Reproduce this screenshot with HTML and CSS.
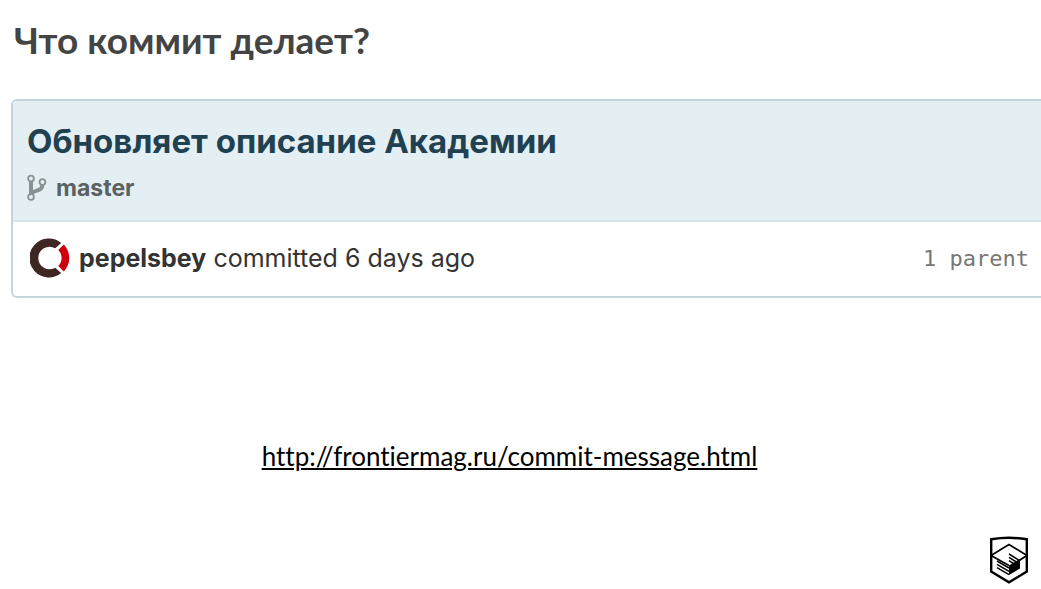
FILE: index.html
```html
<!DOCTYPE html>
<html lang="ru">
<head>
<meta charset="utf-8">
<meta name="viewport" content="width=device-width, initial-scale=1">
<title>Что коммит делает?</title>
<link rel="stylesheet" href="styles.css">
</head>
<body class="slide">
<h1 class="slide-title">Что коммит делает?</h1>
<main class="content">
<article class="commit">
<header class="commit-head">
<h2 class="commit-title">Обновляет описание Академии</h2>
<div class="branch">
<svg class="branch-icon" viewBox="0 0 20 28" aria-hidden="true">
<path d="M4 6V22" fill="none" stroke="#879192" stroke-width="4"/>
<path d="M15.500 10C15.500 17.500 9 15.500 5 19" fill="none" stroke="#879192" stroke-width="4"/>
<g fill="#e4eff4" stroke="#879192" stroke-width="1.800"><circle cx="4" cy="4.500" r="2.900"/><circle cx="15.500" cy="8" r="2.900"/><circle cx="4" cy="23" r="2.900"/></g>
</svg>
<span>master</span>
</div>
</header>
<footer class="commit-meta">
<svg class="avatar" viewBox="0 0 40 40" aria-hidden="true">
<path d="M31.200 4.900A19.500 19.500 0 1 0 31.200 35.100L25.200 29.800A11.300 11.300 0 1 1 25.200 10.200Z" fill="#3e2723"/>
<path d="M33.800 6.500A19.500 19.500 0 0 1 33.800 33.500L28.300 28A11.300 11.300 0 0 0 28.300 12Z" fill="#ce000c"/>
</svg>
<p class="author"><strong>pepelsbey</strong> committed 6 days ago</p>
<span class="parent">1 parent</span>
</footer>
</article>
<a class="source" href="http://frontiermag.ru/commit-message.html">http://frontiermag.ru/commit-message.html</a>
</main>
<footer class="slide-foot">
<svg class="logo" viewBox="0 0 40 48" role="img" aria-label="HTML Academy">
<path d="M2.200 3.300Q20 .3 37.800 3.300V35.500L20 46.300L2.200 35.500Z" fill="none" stroke="#000" stroke-width="2.400"/>
<path d="M2 19.500L20 8.500L38 19.500M2 19.500L20 29.500" fill="none" stroke="#000" stroke-width="1.600"/>
<path d="M20 29.500L38 18.500V20.500L31 25V32.500L20 39Z"/>
<path d="M8 25L20 32M8 28.300L20 35.300M8 31.600L20 38.600M20 18L31 25M20 21.300L29 27M20 24.600L26 28.500" fill="none" stroke="#000" stroke-width="1.500"/>
</svg>
</footer>
</body>
</html>
```
FILE: styles.css
```css
* {
  box-sizing: border-box;
}

.slide {
  display: flex;
  flex-direction: column;
  min-height: 100vh;
  margin: 0;
  overflow-x: hidden;
  background: #fff;
  color: #333;
  font-family: Inter, "Liberation Sans", sans-serif;
}

.slide-title {
  margin: 0;
  padding: 16px 14px 0;
  color: #444;
  font-family: Lato, sans-serif;
  font-size: 37px;
  font-weight: 700;
  line-height: 48px;
}

.content {
  display: flex;
  flex-direction: column;
  margin-top: 35px;
}

.commit {
  margin-left: 11px;
  border: 2px solid #c5d5dd;
  border-right: 0;
  border-radius: 6px 0 0 6px;
  overflow: hidden;
}

.commit-head {
  padding: 20px 14px 18px;
  border-bottom: 2px solid #d8e6ec;
  background: #e4eff4;
}

.commit-title {
  margin: 0;
  color: #224150;
  font-size: 33px;
  font-weight: 700;
  line-height: 40px;
}

.branch {
  display: flex;
  align-items: center;
  gap: 9px;
  margin-top: 13px;
  color: #5c6163;
  font-size: 23px;
  font-weight: 700;
  line-height: 28px;
}

.branch-icon {
  width: 20px;
  height: 28px;
}

.commit-meta {
  display: flex;
  align-items: center;
  padding: 16px 12px 18px 17px;
}

.avatar {
  width: 40px;
  height: 40px;
}

.author {
  flex: 1;
  margin: 0 0 0 9px;
  font-size: 25px;
  line-height: 40px;
}

.parent {
  color: #777;
  font-family: "DejaVu Sans Mono", monospace;
  font-size: 22px;
}

.source {
  align-self: center;
  margin: 140px 22px 0 0;
  color: #000;
  font-family: Lato, sans-serif;
  font-size: 26px;
  font-variant-ligatures: none;
  line-height: 36px;
}

.slide-foot {
  display: flex;
  justify-content: flex-end;
  margin-top: auto;
  padding: 0 12px 5px;
}

.logo {
  width: 40px;
  height: 48px;
}
```
